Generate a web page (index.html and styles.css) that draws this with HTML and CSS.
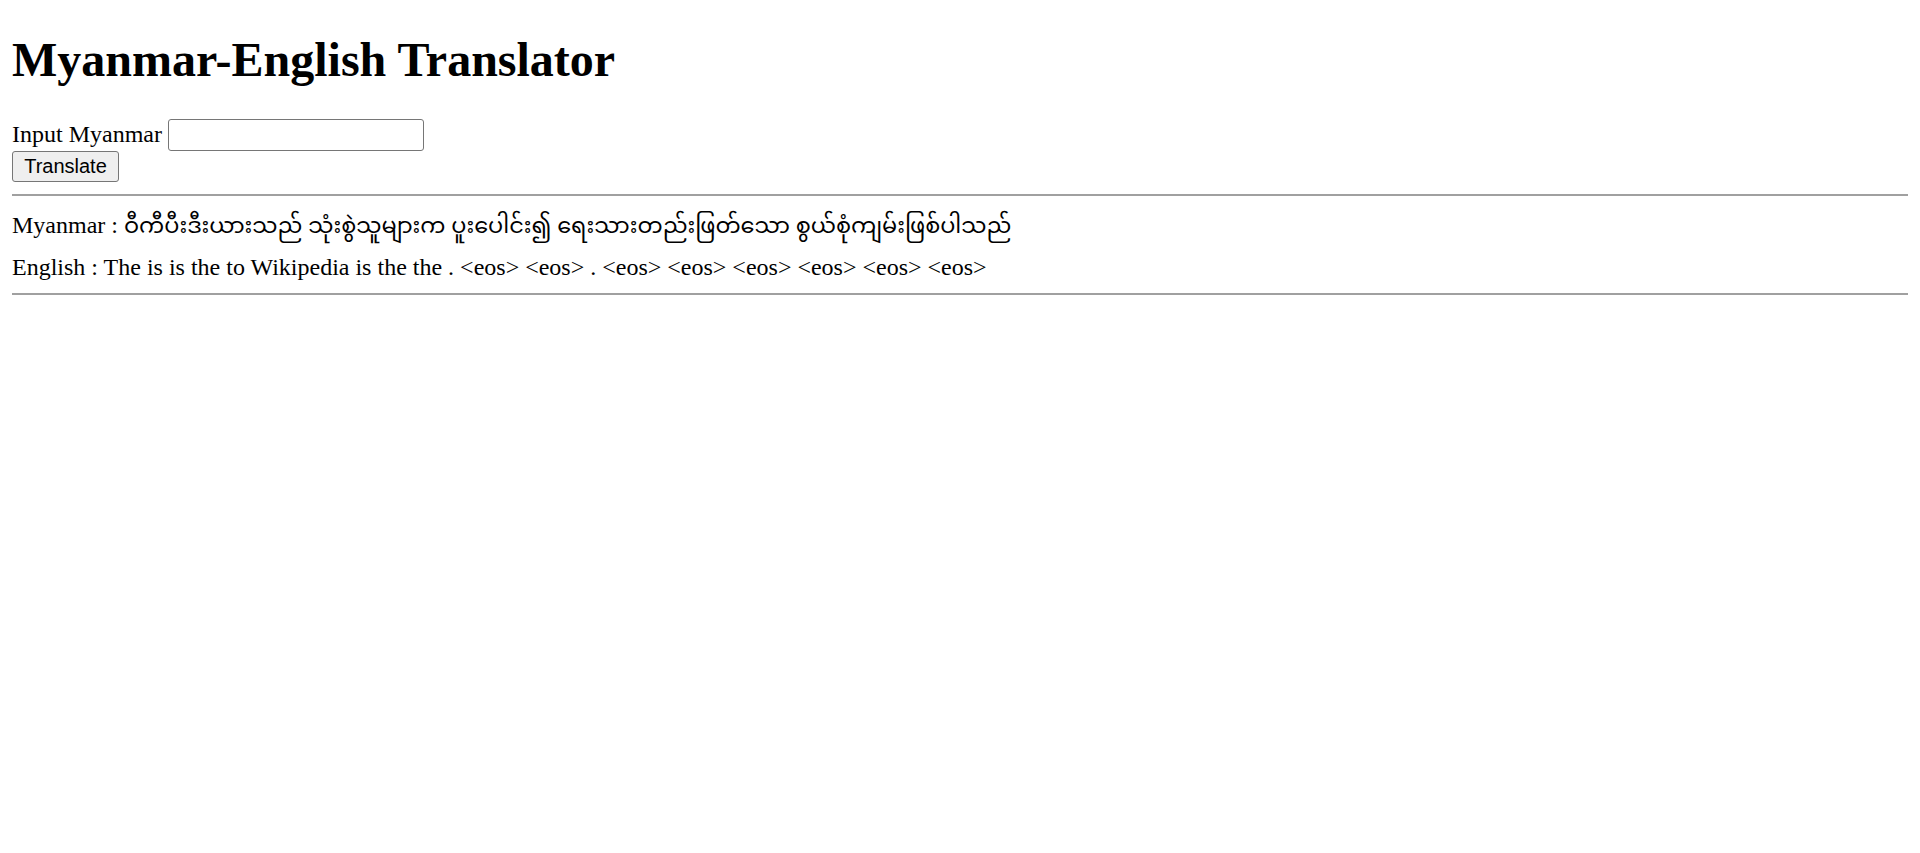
FILE: index.html
```html
<!DOCTYPE html>
<html lang="en">
<head>
<meta charset="utf-8">
<title>Myanmar-English Translator</title>
<link rel="stylesheet" href="styles.css">
</head>
<body class="page">
<h1 class="title">Myanmar-English Translator</h1>
<form class="form">
  <div class="form-row"><label class="label" for="src">Input Myanmar</label> <input class="field" id="src" type="text"></div>
  <div class="form-row"><button class="btn" type="button">Translate</button></div>
</form>
<hr class="rule">
<div class="result result-mm">Myanmar : <span class="mm">ဝီကီပီးဒီးယားသည် သုံးစွဲသူများက ပူးပေါင်း၍ ရေးသားတည်းဖြတ်သော စွယ်စုံကျမ်းဖြစ်ပါသည်</span></div>
<div class="result result-en">English : The is is the to Wikipedia is the the . &lt;eos&gt; &lt;eos&gt; . &lt;eos&gt; &lt;eos&gt; &lt;eos&gt; &lt;eos&gt; &lt;eos&gt; &lt;eos&gt;</div>
<hr class="rule">
</body>
</html>
```

FILE: styles.css
```css
html, body {
  background: #ffffff;
}
.page {
  margin: 12px;
  font-family: "Liberation Serif", "Times New Roman", serif;
  font-size: 24px;
  color: #000000;
}
.title {
  font-size: 48px;
  font-weight: bold;
  margin: 20px 0 30px;
  line-height: 55px;
}
.form {
  margin: 0;
}
.form-row {
  line-height: 27px;
}
.form-row:first-child {
  height: 34px;
  display: flex;
  align-items: flex-end;
  gap: 6px;
}
.label {
  line-height: 27px;
  padding-bottom: 3px;
}
.field {
  box-sizing: border-box;
  width: 256px;
  height: 32px;
  border: 1.5px solid #767676;
  border-radius: 3px;
  padding: 0 3px;
  font-family: "Liberation Sans", Arial, sans-serif;
  font-size: 20px;
  background: #ffffff;
  margin: 0;
}
.btn {
  box-sizing: border-box;
  width: 107px;
  height: 31px;
  border: 1.5px solid #767676;
  border-radius: 3px;
  background: #efefef;
  padding: 0;
  font-family: "Liberation Sans", Arial, sans-serif;
  font-size: 20px;
  color: #000000;
  margin: 0;
  display: block;
}
.rule {
  margin: 12px 0;
  height: 0;
  border: 0;
  border-top: 2px solid #a0a0a0;
}
.result-mm {
  line-height: 34px;
  padding-bottom: 8px;
}
.mm {
  font-family: "Noto Sans Myanmar", "Noto Serif Myanmar", "Padauk", "Myanmar Text", "Myanmar3", sans-serif;
  font-size: 22.4px;
}
.result-en {
  line-height: 28px;
}
```
